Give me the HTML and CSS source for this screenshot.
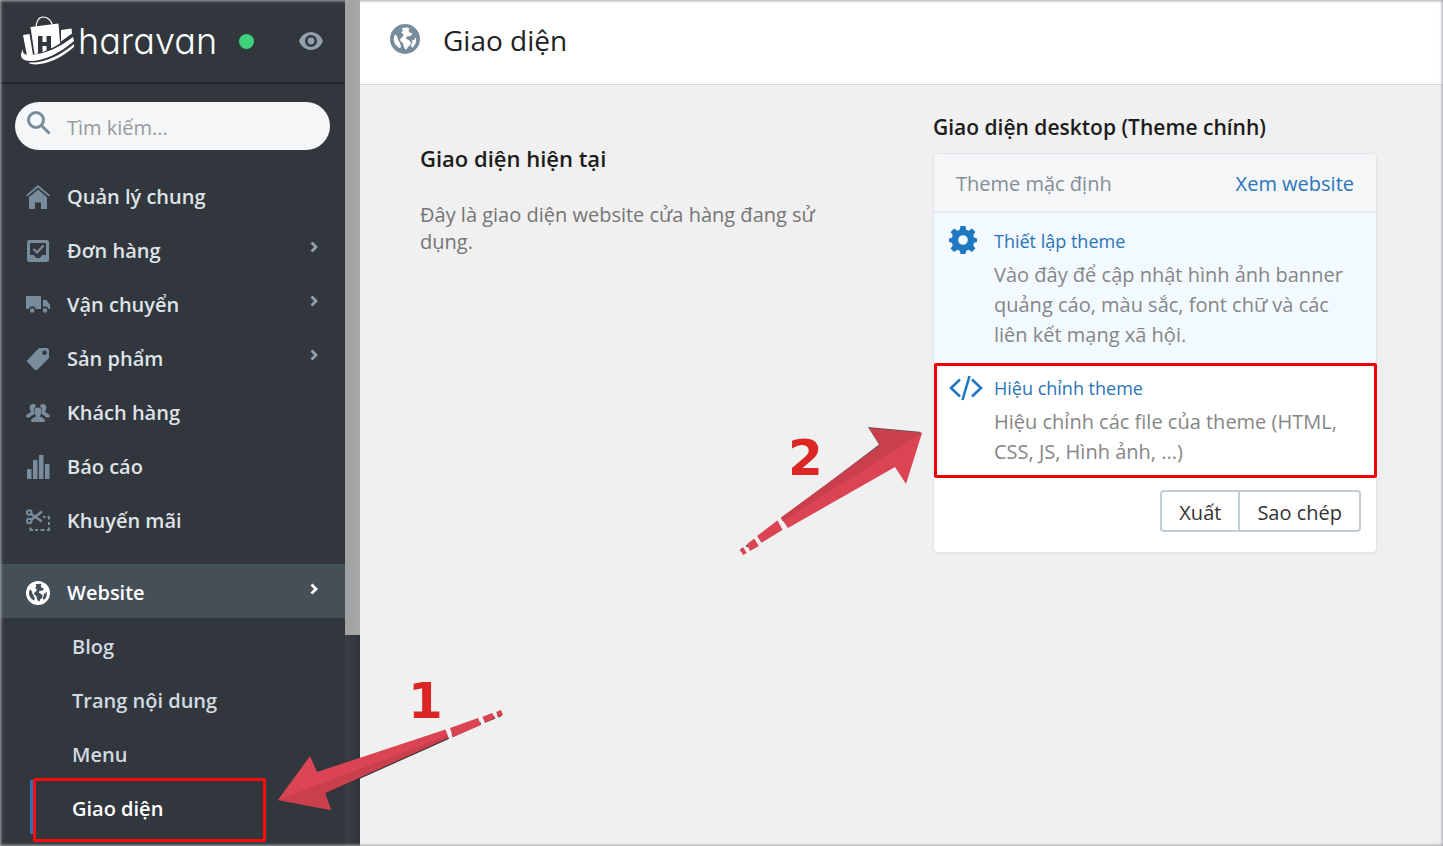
FILE: index.html
```html
<!DOCTYPE html>
<html lang="vi">
<head>
<meta charset="utf-8">
<title>Giao diện</title>
<link rel="stylesheet" href="styles.css">
</head>
<body>
<svg class="defs" aria-hidden="true">
  <symbol id="globe" viewBox="0 0 24 24">
    <path fill-rule="evenodd" d="M12 0a12 12 0 1 0 0 24 12 12 0 0 0 0-24zM9.500 3.200l4.700-.4 1.200.7-.6 2 1 1.200 2.200.8-1.300 2-3.100.4-1 1.600 2.800 1.600 1.400 1.600-.8 2.200-1.800 1.500-.9 2-1-.2-1.400-2.500-.4-2.400-2-1.500-.4-1.800 1.900-1.800 1-1.700-1.900-1.600 1.200-1.500zM4.200 8.200l1.600 2 .6 2.200 1.400 2.600.9 2.200-.3 2.200C5.200 18.300 3 15.500 3 12c0-1.400.5-2.800 1.200-3.800zM20.800 10.500c.6 3.600-.5 6.600-3.200 8.600l-.8-2.600 1.200-1.900-.5-2 1.700.2z"/>
  </symbol>
  <symbol id="chevron" viewBox="0 0 8 12"><path d="M1.500 1.500 6 6l-4.500 4.500" fill="none" stroke="currentColor" stroke-width="2.800"/></symbol>
</svg>
<div class="page">
  <aside class="sidebar">
    <div class="sidebar-body">
      <div class="brand">
        <svg class="brand-mark" viewBox="0 0 54 50" aria-hidden="true">
          <path d="M15 13c0-8 3-12 7-12s8 3 10 9" fill="none" stroke="#fff" stroke-width="1.200"/>
          <path fill="#fff" d="M9.500 11 37.500 7.500l2 25L14 41z"/>
          <path fill="#fff" d="m2 19 6.500-1L12 39l-6 1zM40 14l10.500-1.500.5 5-11 8z"/>
          <path fill="#31373d" d="M17 20h4.500v6h4v-6H30v17l-4.500 1v-8h-4v8H17z"/>
          <path fill="#31373d" d="M3 40c16-1 33-8 50-23v14C38 44 20 50 3 44z"/>
          <path fill="#fff" d="M2 33c-1 4 2 6 7 6 16-1 30-8 43-18l1 4C39 37 24 45 9 45 0 45-2 40 2 33z"/>
          <path fill="#fff" d="M7 46.500c17 1 32-7 46-18.500v3C38 44 22 50 10 48z"/>
        </svg>
        <span class="brand-name">haravan</span>
        <span class="status"></span>
        <button class="eye" type="button" aria-label="Xem">
          <svg viewBox="0 0 24 18"><path fill-rule="evenodd" d="M12 0C6.500 0 2 3.500 0 9c2 5.500 6.500 9 12 9s10-3.500 12-9c-2-5.500-6.500-9-12-9zm0 3a6 6 0 1 1 0 12 6 6 0 0 1 0-12zm0 2.600a3.400 3.400 0 1 0 0 6.800 3.400 3.400 0 0 0 0-6.800z"/></svg>
        </button>
      </div>
      <label class="search">
        <svg viewBox="0 0 24 24" aria-hidden="true"><circle cx="9" cy="9" r="7.500"/><path d="m14.500 14.500 8 8"/></svg>
        <input type="search" placeholder="Tìm kiếm..." aria-label="Tìm kiếm">
      </label>
      <nav class="nav">
        <a class="nav-item" href="#"><svg class="ico" viewBox="0 0 24 24"><path d="M12 0 0 10.300l1.200 1.300L12 2.400l10.800 9.200 1.200-1.300z"/><path d="M12 4.500 3 12.200V24h6v-6.500h6V24h6V12.200z"/></svg>Quản lý chung</a>
        <a class="nav-item" href="#"><svg class="ico" viewBox="0 0 24 24"><path fill-rule="evenodd" d="M3.500 1h17A2.500 2.500 0 0 1 23 3.500v17a2.500 2.500 0 0 1-2.500 2.500h-17A2.500 2.500 0 0 1 1 20.500v-17A2.500 2.500 0 0 1 3.500 1zM4 4v12h4l2 3h4l2-3h4V4z"/><path d="m7.500 10 3.500 3.500 6.500-7" fill="none" stroke="currentColor" stroke-width="2.200"/></svg>Đơn hàng<svg class="arrow"><use href="#chevron"/></svg></a>
        <a class="nav-item" href="#"><svg class="ico" viewBox="0 0 24 24"><path d="M1 3h13a1 1 0 0 1 1 1v12H9.500a3.300 3.300 0 0 0-6.500 0H1a1 1 0 0 1-1-1V4a1 1 0 0 1 1-1zM17 7h3.500l3.500 5v4h-1.500a3.300 3.300 0 0 0-5.500-1.800z"/><circle cx="6.200" cy="17.500" r="2.200"/><circle cx="19" cy="17.500" r="2.200"/></svg>Vận chuyển<svg class="arrow"><use href="#chevron"/></svg></a>
        <a class="nav-item" href="#"><svg class="ico" viewBox="0 0 24 24"><path fill-rule="evenodd" d="M13 1h8.500L23 2.500V11L11 23H9l-8-8.500v-1zM18.500 3.500a2.300 2.300 0 1 0 0 4.600 2.300 2.300 0 0 0 0-4.600z"/></svg>Sản phẩm<svg class="arrow"><use href="#chevron"/></svg></a>
        <a class="nav-item" href="#"><svg class="ico" viewBox="0 0 24 24"><path d="M7 3c2 0 3 1 3 2.500C7.500 7 7.500 10 8.500 12.500 8 14.500 5 14 4 16.500H1c-1 0-1-1.500-.5-2.500 1-1.500 4-2 4.500-3.500C2.500 7.500 3.500 3 7 3zM17 3c-2 0-3 1-3 2.500 2.500 1.500 2.500 4.500 1.500 7 .5 2 3.500 1.500 4.500 4h3c1 0 1-1.500.5-2.500-1-1.500-4-2-4.500-3.500C21.500 7.500 20.500 3 17 3z"/><path d="M12 6.500c4.500 0 4.500 5 2 8.300 0 2 5 1.700 5 5.200 0 1-1 1-2 1H7c-1 0-2 0-2-1 0-3.500 5-3.200 5-5.200-2.500-3.300-2.500-8.300 2-8.300z"/></svg>Khách hàng</a>
        <a class="nav-item" href="#"><svg class="ico" viewBox="0 0 24 24"><path d="M1 14h4.500v10H1zM7 5h4.500v19H7zM13 0h4.500v24H13zM19 9h4.500v15H19z"/></svg>Báo cáo</a>
        <a class="nav-item" href="#"><svg class="ico" viewBox="0 0 24 24"><g fill="none" stroke="currentColor" stroke-width="2"><circle cx="3.200" cy="3.500" r="2.300"/><circle cx="3.200" cy="12" r="2.300"/><path d="M17 8h2.500M21.500 8H23v2.500M23 13v3M23 18.500V21h-2M18.500 21h-4M12 21H9M7 21H4.500v-2.500"/><path d="m5 5 11 7.500M5 11 16 2.500" stroke-width="2.600"/></g></svg>Khuyến mãi</a>
        <a class="nav-item nav-open" href="#"><svg class="ico"><use href="#globe"/></svg>Website<svg class="arrow"><use href="#chevron"/></svg></a>
        <a class="nav-sub" href="#">Blog</a>
        <a class="nav-sub" href="#">Trang nội dung</a>
        <a class="nav-sub" href="#">Menu</a>
        <a class="nav-sub nav-current" href="#" aria-current="page">Giao diện</a>
      </nav>
    </div>
    <div class="scrollbar"><div class="thumb"></div></div>
  </aside>
  <main class="main">
    <header class="topbar">
      <svg class="topbar-icon"><use href="#globe"/></svg>
      <h1>Giao diện</h1>
    </header>
    <div class="content">
      <section class="intro">
        <h2>Giao diện hiện tại</h2>
        <p>Đây là giao diện website cửa hàng đang sử dụng.</p>
      </section>
      <section class="themes">
        <h2>Giao diện desktop (Theme chính)</h2>
        <div class="card">
          <div class="card-head"><span>Theme mặc định</span><a href="#">Xem website</a></div>
          <div class="option option-tint">
            <svg class="gear" viewBox="0 0 28 28" aria-hidden="true"><path fill-rule="evenodd" d="M11.500 0h5l.7 3.800 2.500 1 3.200-2.200 3.500 3.500-2.200 3.200 1 2.500 2.800.700v3.500l-2.800.7-1 2.500 2.200 3.200-3.500 3.500-3.200-2.200-2.500 1-.7 3.300h-5l-.7-3.300-2.500-1-3.200 2.200-3.500-3.500 2.200-3.200-1-2.500L0 16v-3.500l2.800-.7 1-2.500-2.200-3.200 3.500-3.500 3.200 2.200 2.500-1zM14 9.200a4.800 4.800 0 1 0 0 9.600 4.800 4.800 0 0 0 0-9.600z"/></svg>
            <div><a href="#">Thiết lập theme</a><p>Vào đây để cập nhật hình ảnh banner quảng cáo, màu sắc, font chữ và các liên kết mạng xã hội.</p></div>
          </div>
          <div class="option option-marked">
            <svg class="code" viewBox="0 0 34 26" aria-hidden="true"><path d="M11 4.500 2 13l9 8.500M23 4.500l9 8.500-9 8.500M20.500 1l-7 24"/></svg>
            <div><a href="#">Hiệu chỉnh theme</a><p>Hiệu chỉnh các file của theme (HTML, CSS, JS, Hình ảnh, ...)</p></div>
          </div>
          <div class="card-foot"><button type="button">Xuất</button><button type="button">Sao chép</button></div>
        </div>
      </section>
    </div>
  </main>
  <div class="step step-one">
    <b>1</b>
    <svg viewBox="0 0 230 104" aria-hidden="true">
      <path fill="#3b3438" d="m2 93 51 10-5-17L173 30l31-14 20-8-2-2L173 26 40 84z"/>
      <path fill="#da4453" d="M0 92 32 48l7 16 130-43 3 8L47 85l6 17z"/>
      <path fill="#c93f4c" d="m0 92 171-65 1 2L47 85l6 17z"/>
      <path fill="#da4453" d="m172 20 28-10 3 7-28 12zM204 9l10-4 3 5-10 5zM218 4l5-2 2 5-5 2z"/>
      <path stroke="#f0f0f0" stroke-width="4" d="m168 17 6 16M201 6l6 14"/>
      <path stroke="#f0f0f0" stroke-width="3" d="m215 1 5 12"/>
    </svg>
  </div>
  <div class="step step-two">
    <b>2</b>
    <svg viewBox="0 0 184 128" aria-hidden="true">
      <path fill="#5a5255" d="m128 0 54 5-40 14L1 125l-1-2L139 17.500z"/>
      <path fill="#da4453" d="m182 6-16 51-11-17L48 101l-7-10L140 18 129 1z"/>
      <path fill="#c93f4c" d="M182 6 43 94l-2-3.500L140 18 129 1z"/>
      <path fill="#da4453" d="m17 109 21-16 6 9-23 14zM7 117l8-6 4 8-9 5zM0 122l4-2 3 6-4 2z"/>
      <path stroke="#f0f0f0" stroke-width="4" d="m38 90 8 15M14 108l8 12"/>
      <path stroke="#f0f0f0" stroke-width="3" d="m3 117 6 10"/>
    </svg>
  </div>
</div>
</body>
</html>
```
FILE: styles.css
```css
* { box-sizing: border-box; }
body { margin: 0; font: 20px/30px "Open Sans", "Noto Sans", sans-serif; color: #212b35; background: #f0f0f0; }
a { color: #2a74b8; text-decoration: none; }
h1, h2, p { margin: 0; }
svg { fill: currentColor; flex: none; }
.defs { position: absolute; width: 0; height: 0; }
.page { position: relative; display: flex; min-height: 100vh; }
.page::after { content: ""; position: absolute; inset: 0; pointer-events: none; box-shadow: inset 0 0 3px 1px #a5a6ab; }

.sidebar { display: flex; width: 360px; height: 100vh; overflow: hidden; background: #31373d; }
.sidebar-body { flex: 1; min-width: 0; }
.scrollbar { flex: none; width: 15px; background: linear-gradient(90deg, #3a4046, #2d3339); }
.thumb { height: 75%; background: linear-gradient(90deg, #a0a1a2, #a8a8a8); }
.brand { display: flex; align-items: center; height: 84px; padding: 0 22px 0 21px; border-bottom: 2px solid #20262b; color: #fff; }
.brand-mark { width: 54px; height: 50px; }
.brand-name { margin-left: 3px; font: 400 36px/40px Inter, sans-serif; font-weight: 300; font-feature-settings: "cv11"; }
.status { width: 15px; height: 15px; margin-left: 22px; border-radius: 50%; background: #3fd07a; }
.eye { margin-left: auto; padding: 0; border: 0; background: none; color: #919eab; }
.eye svg { display: block; width: 24px; height: 18px; }
.search { display: flex; align-items: center; gap: 16px; height: 48px; margin: 18px 15px 20px; padding: 0 12px; border-radius: 24px; background: #f4f6f8; color: #798c9c; }
.search svg { width: 24px; height: 24px; margin-bottom: 6px; fill: none; stroke: currentColor; stroke-width: 3; }
.search input { flex: 1; min-width: 0; padding: 4px 0 0; border: 0; outline: 0; background: none; font: inherit; }
.search input::placeholder { color: #999; }
.nav-item, .nav-sub { position: relative; display: flex; align-items: center; height: 54px; font-weight: 600; color: #dfe3e8; }
.nav-item { gap: 17px; padding: 0 27px 0 26px; }
.ico { width: 24px; height: 24px; color: #798c9c; }
.arrow { width: 8px; height: 12px; margin: 0 0 8px auto; color: #919eab; }
.nav-open { margin-top: 16px; padding-top: 3px; background: #454f57; color: #fff; }
.nav-open .ico, .nav-open .arrow { color: #fff; }
.nav-sub { padding: 4px 0 0 72px; color: #d3dae1; }
.nav-current { color: #fff; }
.nav-current::before { content: ""; position: absolute; inset: 0 auto 0 30px; width: 3px; background: #2a74b8; }
.nav-current::after { content: ""; position: absolute; inset: -2px 79px -8px 33px; border: 3px solid #f80b0b; border-radius: 2px; }

.main { flex: 1; min-width: 0; }
.topbar { display: flex; align-items: center; gap: 23px; height: 85px; padding: 0 30px 4px; background: #fff; border-bottom: 1px solid #d8d9da; }
.topbar-icon { width: 30px; height: 30px; margin-bottom: 2px; color: #798c9c; }
h1 { font-size: 28px; line-height: 40px; font-weight: 400; color: #212121; }
h2 { font-size: 21px; line-height: 30px; font-weight: 600; color: #1c1c1c; }
.content { display: grid; grid-template-columns: 513fr 444fr; padding: 27px 66px 40px 60px; }
.intro { padding-top: 31px; }
.intro h2 { font-size: 22px; }
.intro p { max-width: 420px; margin-top: 28px; line-height: 27px; color: #757575; }
.card { margin-top: 11px; background: #fff; border: 1px solid #dfe5ea; border-radius: 5px; box-shadow: 0 1px 2px #dfe3e8; }
.card-head { display: flex; justify-content: space-between; padding: 15px 22px 12px; border-bottom: 2px solid #e4e9ed; border-radius: 5px 5px 0 0; background: #f4f6f8; color: #868e96; }
.option { display: flex; padding: 13px 20px 11px 15px; color: #868686; }
.option > div { flex: 1; }
.option a { font-size: 18px; }
.option p { margin-top: 4px; }
.option-tint { background: #f2f9ff; }
.gear { width: 28px; height: 28px; margin-right: 17px; color: #1f78c1; }
.code { width: 34px; height: 26px; margin: 2px 11px 0 0; fill: none; stroke: #1f78c1; stroke-width: 2.6; }
.option-marked { margin: 2px -1px 0 0; padding: 7px 20px 8px 12px; border: 3px solid #f00006; border-radius: 2px; }
.card-foot { display: flex; justify-content: flex-end; padding: 12px 15px 20px; }
.card-foot button { height: 42px; padding: 4px 17px 0; border: 2px solid #c4cdd5; border-radius: 0 4px 4px 0; background: #fff; font: inherit; color: #333; }
.card-foot button:first-child { margin-right: -2px; border-radius: 4px 0 0 4px; }

.step { position: absolute; color: #dc2626; }
.step b { position: absolute; font: bold 50px/50px "DejaVu Sans", sans-serif; }
.step svg { display: block; }
.step-one { left: 278px; top: 708px; }
.step-one svg { width: 230px; height: 104px; }
.step-one b { left: 130px; top: -32px; }
.step-two { left: 740px; top: 427px; }
.step-two svg { width: 184px; height: 128px; }
.step-two b { left: 48px; top: 6px; }
```
